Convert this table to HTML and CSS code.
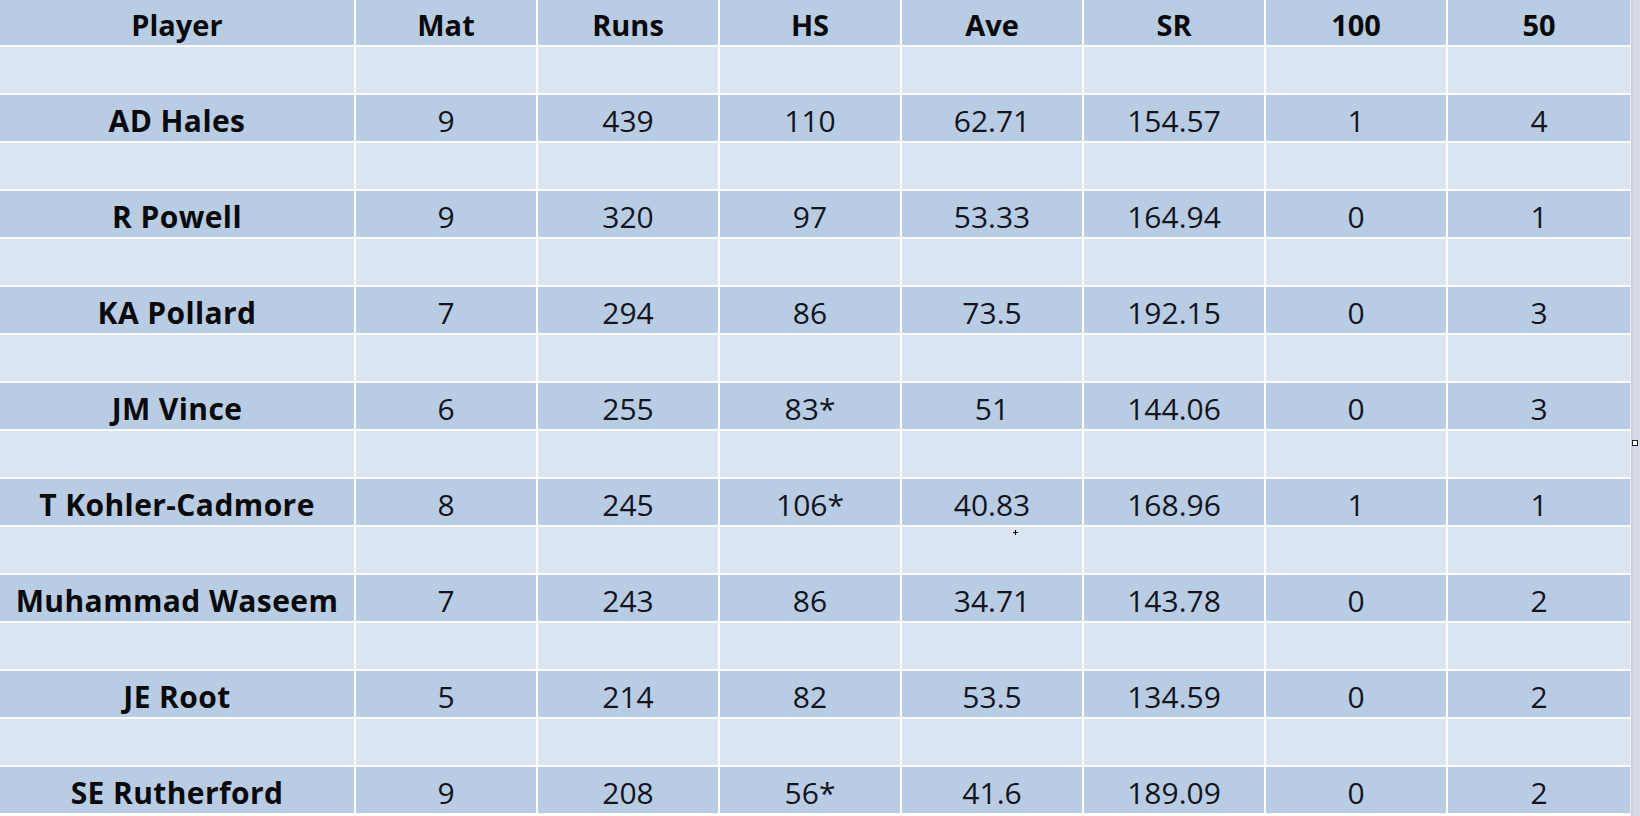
FILE: index.html
```html
<!DOCTYPE html>
<html lang="en">
<head>
<meta charset="utf-8">
<title>Batting stats</title>
<link rel="stylesheet" href="styles.css">
</head>
<body>
<div class="page">
  <div class="sheet">
    <div class="row head">
      <div class="cell">Player</div><div class="cell">Mat</div><div class="cell">Runs</div><div class="cell">HS</div><div class="cell">Ave</div><div class="cell">SR</div><div class="cell">100</div><div class="cell">50</div>
    </div>
    <div class="row blank"><div class="cell"></div><div class="cell"></div><div class="cell"></div><div class="cell"></div><div class="cell"></div><div class="cell"></div><div class="cell"></div><div class="cell"></div></div>
    <div class="row data">
      <div class="cell name">AD Hales</div><div class="cell">9</div><div class="cell">439</div><div class="cell">110</div><div class="cell">62.71</div><div class="cell">154.57</div><div class="cell">1</div><div class="cell">4</div>
    </div>
    <div class="row blank"><div class="cell"></div><div class="cell"></div><div class="cell"></div><div class="cell"></div><div class="cell"></div><div class="cell"></div><div class="cell"></div><div class="cell"></div></div>
    <div class="row data">
      <div class="cell name">R Powell</div><div class="cell">9</div><div class="cell">320</div><div class="cell">97</div><div class="cell">53.33</div><div class="cell">164.94</div><div class="cell">0</div><div class="cell">1</div>
    </div>
    <div class="row blank"><div class="cell"></div><div class="cell"></div><div class="cell"></div><div class="cell"></div><div class="cell"></div><div class="cell"></div><div class="cell"></div><div class="cell"></div></div>
    <div class="row data">
      <div class="cell name">KA Pollard</div><div class="cell">7</div><div class="cell">294</div><div class="cell">86</div><div class="cell">73.5</div><div class="cell">192.15</div><div class="cell">0</div><div class="cell">3</div>
    </div>
    <div class="row blank"><div class="cell"></div><div class="cell"></div><div class="cell"></div><div class="cell"></div><div class="cell"></div><div class="cell"></div><div class="cell"></div><div class="cell"></div></div>
    <div class="row data">
      <div class="cell name">JM Vince</div><div class="cell">6</div><div class="cell">255</div><div class="cell">83*</div><div class="cell">51</div><div class="cell">144.06</div><div class="cell">0</div><div class="cell">3</div>
    </div>
    <div class="row blank"><div class="cell"></div><div class="cell"></div><div class="cell"></div><div class="cell"></div><div class="cell"></div><div class="cell"></div><div class="cell"></div><div class="cell"></div></div>
    <div class="row data">
      <div class="cell name">T Kohler-Cadmore</div><div class="cell">8</div><div class="cell">245</div><div class="cell">106*</div><div class="cell">40.83</div><div class="cell">168.96</div><div class="cell">1</div><div class="cell">1</div>
    </div>
    <div class="row blank"><div class="cell"></div><div class="cell"></div><div class="cell"></div><div class="cell"></div><div class="cell cursor-cell"><span class="cursor"></span></div><div class="cell"></div><div class="cell"></div><div class="cell"></div></div>
    <div class="row data">
      <div class="cell name">Muhammad Waseem</div><div class="cell">7</div><div class="cell">243</div><div class="cell">86</div><div class="cell">34.71</div><div class="cell">143.78</div><div class="cell">0</div><div class="cell">2</div>
    </div>
    <div class="row blank"><div class="cell"></div><div class="cell"></div><div class="cell"></div><div class="cell"></div><div class="cell"></div><div class="cell"></div><div class="cell"></div><div class="cell"></div></div>
    <div class="row data">
      <div class="cell name">JE Root</div><div class="cell">5</div><div class="cell">214</div><div class="cell">82</div><div class="cell">53.5</div><div class="cell">134.59</div><div class="cell">0</div><div class="cell">2</div>
    </div>
    <div class="row blank"><div class="cell"></div><div class="cell"></div><div class="cell"></div><div class="cell"></div><div class="cell"></div><div class="cell"></div><div class="cell"></div><div class="cell"></div></div>
    <div class="row data">
      <div class="cell name">SE Rutherford</div><div class="cell">9</div><div class="cell">208</div><div class="cell">56*</div><div class="cell">41.6</div><div class="cell">189.09</div><div class="cell">0</div><div class="cell">2</div>
    </div>
  </div>
  <div class="edge"><span class="handle"></span></div>
</div>
</body>
</html>
```

FILE: styles.css
```css
html, body {
  margin: 0;
  padding: 0;
  background: #ffffff;
}

body {
  width: 1640px;
  height: 816px;
  overflow: hidden;
  font-family: "Open Sans", "Liberation Sans", sans-serif;
  color: #111111;
}

.page {
  display: flex;
  width: 1640px;
  height: 816px;
}

.sheet {
  width: 1630px;
  display: flex;
  flex-direction: column;
  gap: 2px;
  background: #ffffff;
}

.row {
  display: grid;
  grid-template-columns: 354px repeat(6, 180px) 182px;
  column-gap: 2px;
  height: 46px;
  flex: none;
}

.row.head {
  height: 45px;
}

.cell {
  display: flex;
  align-items: center;
  justify-content: center;
  font-size: 30px;
  line-height: 1;
  padding-top: 5px;
  box-sizing: border-box;
  white-space: nowrap;
}

.head .cell,
.data .cell {
  background: #b8cce4;
}

.blank .cell {
  background: #dbe5f1;
}

.head .cell {
  font-weight: 700;
  font-size: 29px;
  color: #0a0a0a;
  padding-top: 3px;
}

.data .cell {
  font-weight: 400;
  color: #14141c;
}

.data .cell.name {
  font-weight: 700;
  color: #0a0a0a;
  letter-spacing: 0.4px;
}

.cursor-cell {
  position: relative;
}

.cursor {
  position: absolute;
  left: 111px;
  top: 3px;
  width: 5px;
  height: 5px;
  background:
    linear-gradient(#000, #000) center / 5px 1px no-repeat,
    linear-gradient(#000, #000) center / 1px 5px no-repeat;
}

.edge {
  position: relative;
  width: 10px;
  flex: none;
  background: linear-gradient(to right, #eef0f6 0, #eef0f6 1px, #c9cedd 1px, #c9cedd 3px, #d6dae6 3px, #d6dae6 100%);
}

.handle {
  position: absolute;
  left: 2px;
  top: 440px;
  width: 4px;
  height: 4px;
  border: 1px solid #202020;
  background: #ffffff;
}
```
